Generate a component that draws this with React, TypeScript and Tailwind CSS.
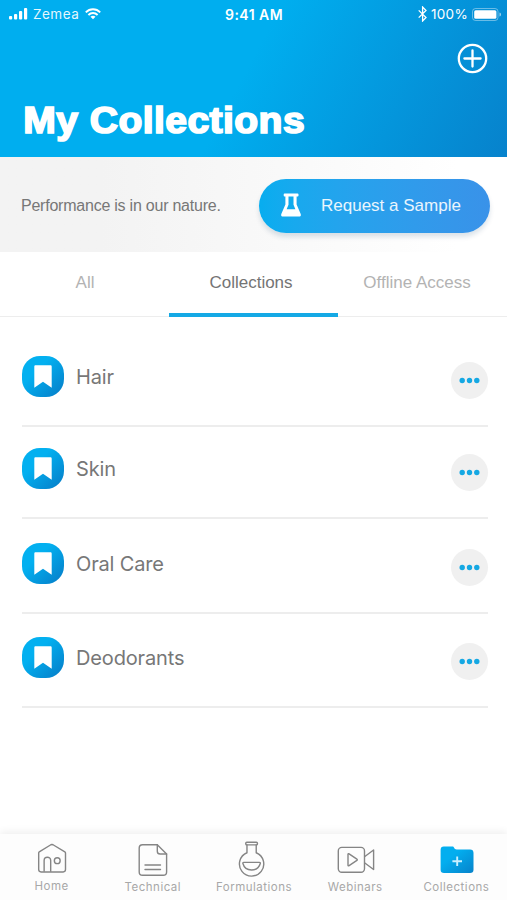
import type { ReactNode } from "react";

function SignalIcon() {
  return (
    <svg width="19" height="12" viewBox="0 0 19 12" fill="white">
      <rect x="0" y="8" width="3.2" height="3.5" rx="1" />
      <rect x="5" y="6" width="3.2" height="5.5" rx="1" />
      <rect x="10" y="3" width="3.2" height="8.5" rx="1" />
      <rect x="15" y="0" width="3.2" height="11.5" rx="1" />
    </svg>
  );
}

function WifiIcon() {
  return (
    <svg width="16" height="12" viewBox="0 0 16 12" fill="none" stroke="white" strokeWidth="1.9">
      <path d="M.8 4.3C4.8.2 11.2.2 15.2 4.3" />
      <path d="M3.4 7c2.6-2.6 6.6-2.6 9.2 0" />
      <path d="M8 11.2 5.5 8.8c1.4-1.4 3.6-1.4 5 0Z" fill="white" stroke="none" />
    </svg>
  );
}

function BluetoothIcon() {
  return (
    <svg width="9" height="16" viewBox="0 0 9 16" fill="none" stroke="white" strokeWidth="1.3">
      <path d="m.7 4.4 7.3 7.1L4.6 15V1L8 4.5.7 11.6" />
    </svg>
  );
}

function BatteryIcon() {
  return (
    <svg width="30" height="13" viewBox="0 0 30 13" fill="none">
      <rect x=".5" y=".5" width="25.5" height="12" rx="3" stroke="white" strokeOpacity=".4" />
      <rect x="2.2" y="2.2" width="22.2" height="8.6" rx="1.5" fill="white" />
      <path d="M27.5 4.5c2 .6 2 3.4 0 4Z" fill="white" fillOpacity=".6" />
    </svg>
  );
}

function BeakerIcon() {
  return (
    <svg width="20" height="24" viewBox="0 0 20 24">
      <path
        d="M3.6.5h13c.6 0 .9.3.9.9v1.2c0 .6-.3.9-.9.9h-1V11.5l4 9.3c.7 1.7 0 2.8-1.6 2.8H2C.4 23.6-.3 22.5.4 20.8l4-9.3V3.5h-.8c-.6 0-.9-.3-.9-.9V1.4c0-.6.3-.9.9-.9Z"
        fill="white"
      />
      <path d="M7.5 3.5h5v8.2l1.9 4.6H5.6l1.9-4.6Z" fill="#0fabee" />
    </svg>
  );
}

function HomeIcon() {
  return (
    <svg width="30" height="32" viewBox="0 0 32 34" fill="none" stroke="#858585" strokeWidth="1.5" strokeLinejoin="round">
      <path d="M2.4 9.3 14.8 1.8c.8-.4 1.5-.4 2.3 0l12.6 7.5c.5.3.7.7.7 1.3v17.7c0 1.5-1 2.5-2.5 2.5H4.3c-1.5 0-2.5-1-2.5-2.5V10.600c0-.6.1-1 .6-1.3Z" />
      <path d="M7.6 30.6V18.5c0-4.5 7-4.5 7 0v12.1" />
      <circle cx="21.6" cy="18.8" r="3.1" />
    </svg>
  );
}

function DocumentIcon() {
  return (
    <svg width="32" height="34" viewBox="0 0 32 34" fill="none" stroke="#858585" strokeWidth="1.4" strokeLinejoin="round" strokeLinecap="round">
      <path d="M20.3 1.8H5.6C3.6 1.8 2.2 3.2 2.2 5v24c0 2 1.4 3.3 3.4 3.3h20.6c2 0 3.4-1.3 3.4-3.3V11Z" />
      <path d="M20.3 1.8v6.4c0 2 .8 2.8 2.8 2.8h6.5" />
      <path d="M8 22h15.5M8 26.5h15.5" />
    </svg>
  );
}

function FlaskIcon() {
  return (
    <svg className="mr-[5px] mb-[2px]" width="27" height="36" viewBox="0 0 28 37" fill="none" stroke="#858585" strokeWidth="1.45" strokeLinejoin="round" strokeLinecap="round">
      <path d="M9.3 3.8V12a12.6 12.6 0 1 0 9.6 0V3.8" />
      <rect x="8" y="1.2" width="12.2" height="2.6" rx="1.2" />
      <path d="M6 22h16.2c.8 0 1.1.5.9 1.2-2.5 9-15.6 9-18 0-.2-.7.1-1.2.9-1.2Z" />
    </svg>
  );
}

function VideoIcon() {
  return (
    <svg className="ml-[2px]" width="38" height="28" viewBox="0 0 38 28" fill="none" stroke="#858585" strokeWidth="1.4" strokeLinejoin="round">
      <rect x="1.3" y="1.4" width="26.2" height="24.8" rx="3.5" />
      <path d="M27.5 10.8 36.6 4v19.5l-9.1-6.8" />
      <path d="M11 8.3v10.9c0 .7.5.9 1.1.5l7.8-5.3c.5-.4.5-.9 0-1.2L12.1 7.9c-.6-.4-1.1-.2-1.1.4Z" />
    </svg>
  );
}

function FolderIcon() {
  return (
    <svg className="ml-[2px]" width="34" height="28" viewBox="0 0 34 28">
      <defs>
        <linearGradient id="folder" x1="0" y1="0" x2="1" y2="1">
          <stop offset=".35" stopColor="#03aeef" />
          <stop offset="1" stopColor="#0782ca" />
        </linearGradient>
      </defs>
      <path
        d="M3.8.5h8.5c1 0 1.4.4 1.8 1.3.5 1.2 1.2 1.7 2.6 1.7h13.4c2.2 0 3.4 1.2 3.4 3.3v17c0 2.1-1.2 3.3-3.4 3.3H4C1.8 27.1.6 25.9.6 23.8V3.8C.6 1.7 1.7.5 3.8.5Z"
        fill="url(#folder)"
      />
      <path d="M17.2 10.5v9.6M12.4 15.3h9.6" stroke="#c9f0ff" strokeWidth="1.9" fill="none" />
    </svg>
  );
}

const collections = [
  { name: "Hair", height: "h-[110px]" },
  { name: "Skin", height: "h-[92px]" },
  { name: "Oral Care", height: "h-[95px]" },
  { name: "Deodorants", height: "h-[94px]" },
];

function CollectionRow({ name, height }: { name: string; height: string }) {
  return (
    <li className={`flex items-end border-b-2 border-[#ededed] pb-[28px] ${height}`}>
      <span className="flex h-[41px] w-[42px] items-center justify-center rounded-[18px] bg-linear-to-br from-[#03b0f0] from-35% to-[#077bc6]">
        <svg width="18" height="23" viewBox="0 0 18 23" fill="white">
          <path d="M1.7.3h14.6c.9 0 1.4.5 1.4 1.4v21L9 16.8.3 22.7v-21C.3.8.8.3 1.7.3Z" />
        </svg>
      </span>
      <span className="ml-3 h-[41px] flex-1 text-[20px] leading-[43px] tracking-[-0.15px] text-[#777]">{name}</span>
      <button className="-mb-[2px] flex size-[37px] items-center justify-center rounded-full bg-[#f0f0f0]">
        <svg width="21" height="7" viewBox="0 0 21 7" fill="#15a8e3">
          <circle cx="3.2" cy="3.5" r="2.7" />
          <circle cx="10.5" cy="3.5" r="2.7" />
          <circle cx="17.8" cy="3.5" r="2.7" />
        </svg>
      </button>
    </li>
  );
}

function NavItem({ icon, label, raised }: { icon: ReactNode; label: string; raised?: boolean }) {
  return (
    <a className={`flex w-[101.4px] flex-col items-center ${raised ? "pt-[5px]" : "pt-[6px]"}`}>
      <span className="flex h-[40px] items-center justify-center">{icon}</span>
      <span className="text-[11.5px] leading-[14px] tracking-[0.5px] text-[#a8a8a8]">{label}</span>
    </a>
  );
}

export default function App() {
  return (
    <div className="flex h-[900px] w-[507px] flex-col overflow-hidden bg-white font-['Inter',sans-serif]">
      <header className="h-[157px] shrink-0 bg-[linear-gradient(118deg,#00aeef_48%,#0782cc_100%)] text-white">
        <div className="grid h-[28px] grid-cols-[1fr_auto_1fr] items-center pr-[5px] pl-[9px] text-[13.5px]">
          <div className="flex items-center">
            <SignalIcon />
            <span className="mr-[6px] ml-[5px] tracking-[0.5px] opacity-90">Zemea</span>
            <WifiIcon />
          </div>
          <span className="mr-[3px] text-[14px] font-semibold tracking-[0.45px]">9:41 AM</span>
          <div className="flex items-center justify-end">
            <BluetoothIcon />
            <span className="mr-[4px] ml-[4px] text-[13.5px] tracking-[0.3px]">100%</span>
            <BatteryIcon />
          </div>
        </div>
        <div className="flex h-[60px] justify-end pt-[15px] pr-[19px]">
          <svg width="31" height="31" viewBox="0 0 31 31" fill="none" stroke="white" strokeWidth="2.3">
            <circle cx="15.5" cy="15.5" r="13.7" />
            <path d="M15.5 7.4v16.2M7.4 15.5h16.2" strokeLinecap="round" />
          </svg>
        </div>
        <h1 className="origin-left scale-x-[1.085] pt-[13px] pl-[21.5px] font-['Liberation_Sans',sans-serif] text-[36px] leading-[40px] font-bold tracking-[0.4px] [-webkit-text-stroke:1.7px_white]">
          My Collections
        </h1>
      </header>

      <section className="flex h-[95px] shrink-0 items-center justify-between bg-linear-to-r from-[#f3f3f3] from-20% to-white to-90% pr-[17px] pl-[21px] font-['Liberation_Sans',sans-serif]">
        <p className="pt-[3px] text-[16px] tracking-[-0.23px] text-[#777]">Performance is in our nature.</p>
        <button className="mt-[3px] flex h-[54px] w-[231px] items-center rounded-full bg-linear-to-r from-[#07adef] to-[#3992e9] pl-[22px] shadow-[0_4px_5px_rgba(0,60,100,0.14)]">
          <span className="-mt-[2px]">
            <BeakerIcon />
          </span>
          <span className="ml-[20px] text-[17px] text-white/90">Request a Sample</span>
        </button>
      </section>

      <nav className="grid h-[65px] shrink-0 grid-cols-3 border-b border-[#ededed] font-['Liberation_Sans',sans-serif] text-[17px] leading-[61px] text-[#b3b3b3]">
        <a className="pl-px text-center">All</a>
        <a className="-mb-px border-b-4 border-[#15a9e5] pr-[5px] text-center text-[#747474]">Collections</a>
        <a className="pr-[11px] text-center">Offline Access</a>
      </nav>

      <ul className="mr-[19px] ml-[22px] flex-1">
        {collections.map((item) => (
          <CollectionRow key={item.name} {...item} />
        ))}
      </ul>

      <footer className="flex h-[66px] shrink-0 bg-[#fdfdfd] pl-px shadow-[0_-2px_8px_rgba(0,0,0,0.07)]">
        <NavItem icon={<HomeIcon />} label="Home" raised />
        <NavItem icon={<DocumentIcon />} label="Technical" />
        <NavItem icon={<FlaskIcon />} label="Formulations" />
        <NavItem icon={<VideoIcon />} label="Webinars" />
        <NavItem icon={<FolderIcon />} label="Collections" />
      </footer>
    </div>
  );
}
